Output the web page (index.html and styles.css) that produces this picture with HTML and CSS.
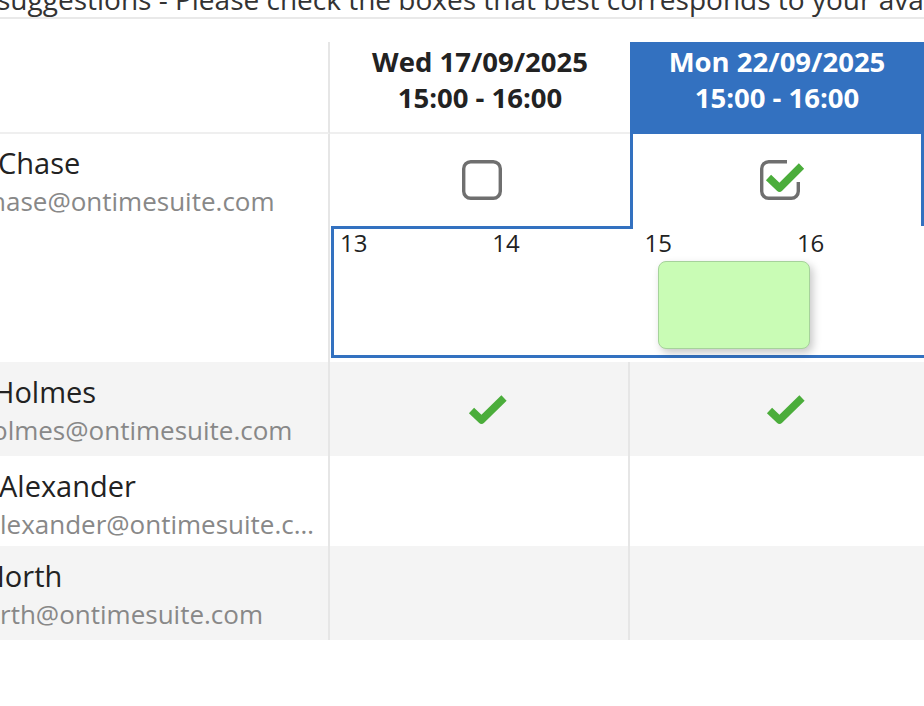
FILE: index.html
```html
<!DOCTYPE html>
<html lang="en">
<head>
<meta charset="utf-8">
<title>Poll</title>
<link rel="stylesheet" href="styles.css">
</head>
<body>
<p class="intro">suggestions - Please check the boxes that best corresponds to your availability</p>
<div class="poll">
  <div class="row head-row">
    <div class="cell name-col head"></div>
    <div class="cell head"><span>Wed 17/09/2025</span><span>15:00 - 16:00</span></div>
    <div class="cell head selected"><span>Mon 22/09/2025</span><span>15:00 - 16:00</span></div>
    <div class="cell head"></div>
  </div>

  <div class="row first">
    <div class="cell name-col person">
      <div class="name shift-c">Chase</div>
      <div class="email shift-ce">hase@ontimesuite.com</div>
    </div>
    <div class="cell vote">
      <svg class="box" width="40" height="40" viewBox="0 0 40 40"><rect x="1.7" y="1.7" width="36.6" height="36.6" rx="7" fill="none" stroke="#6f6f6f" stroke-width="3.4"/></svg>
    </div>
    <div class="cell vote selected-body">
      <svg class="box checked" width="48" height="42" viewBox="0 0 48 42"><path d="M27 1.7H8.7A7 7 0 0 0 1.7 8.7V31.3A7 7 0 0 0 8.7 38.3H31.3A7 7 0 0 0 38.3 31.3V22" fill="none" stroke="#6f6f6f" stroke-width="3.4"/><path d="M8.5 17.5L19.5 28L41.5 6" fill="none" stroke="#4bad3b" stroke-width="7.5" stroke-linejoin="round"/></svg>
    </div>
    <div class="cell"></div>
  </div>

  <div class="row expand">
    <div class="cell name-col"></div>
    <div class="timeline">
      <div class="hours"><span>13</span><span>14</span><span>15</span><span>16</span></div>
      <div class="slot-block"></div>
    </div>
  </div>

  <div class="row alt">
    <div class="cell name-col person">
      <div class="name shift-h">Holmes</div>
      <div class="email shift-he">olmes@ontimesuite.com</div>
    </div>
    <div class="cell vote col-two">
      <svg class="tick" width="56" height="30" viewBox="0 0 56 30"><path d="M20.5 16.5L30.5 26L53 4" fill="none" stroke="#4bad3b" stroke-width="7.5" stroke-linejoin="round"/></svg>
    </div>
    <div class="cell vote">
      <svg class="tick" width="56" height="30" viewBox="0 0 56 30"><path d="M20.5 16.5L30.5 26L53 4" fill="none" stroke="#4bad3b" stroke-width="7.5" stroke-linejoin="round"/></svg>
    </div>
    <div class="cell"></div>
  </div>

  <div class="row">
    <div class="cell name-col person">
      <div class="name shift-a">Alexander</div>
      <div class="email">lexander@ontimesuite.com</div>
    </div>
    <div class="cell vote col-two"></div>
    <div class="cell vote"></div>
    <div class="cell"></div>
  </div>

  <div class="row alt">
    <div class="cell name-col person">
      <div class="name shift-n">North</div>
      <div class="email">rth@ontimesuite.com</div>
    </div>
    <div class="cell vote col-two"></div>
    <div class="cell vote"></div>
    <div class="cell"></div>
  </div>
</div>
</body>
</html>
```

FILE: styles.css
```css
html, body {
  margin: 0;
  padding: 0;
  background: #ffffff;
  overflow: hidden;
}

body {
  width: 924px;
  height: 706px;
  font-family: "Open Sans", "Noto Sans", sans-serif;
  color: #222222;
}

.intro {
  margin: -19px 0 23px 0;
  text-indent: -3px;
  font-size: 28px;
  line-height: 36px;
  color: #333333;
  white-space: nowrap;
  overflow: hidden;
  border-bottom: 2px solid #e9e9e9;
}

.poll {
  width: 1224px;
}

.row {
  display: grid;
  grid-template-columns: 330px 300px 294px 300px;
  height: 90px;
}

.row.head-row,
.row.first {
  height: 92px;
}

.row.alt {
  height: 94px;
  background: #f4f4f4;
}

.cell {
  box-sizing: border-box;
  min-width: 0;
}

.name-col {
  border-right: 2px solid #e6e6e6;
}

.head {
  height: 92px;
  padding-top: 2px;
  border-bottom: 2px solid #efefef;
  display: flex;
  flex-direction: column;
  align-items: center;
  font-size: 27.5px;
  line-height: 36px;
  font-weight: 700;
  color: #222222;
}

.head.selected {
  background: #3371c0;
  color: #ffffff;
  border-bottom-color: #3371c0;
}

.person {
  padding: 11px 12px 0 0;
  overflow: hidden;
}

.row.first .person {
  padding-top: 10px;
}

.name {
  font-size: 29px;
  line-height: 38px;
  white-space: nowrap;
  color: #222222;
}

.email {
  font-size: 26px;
  line-height: 38px;
  color: #888888;
  white-space: nowrap;
  overflow: hidden;
  text-overflow: ellipsis;
}

.shift-c { margin-left: -2px; }
.shift-ce { margin-left: -10px; }
.shift-h { margin-left: -7px; }
.shift-he { margin-left: -8px; }
.shift-a { margin-left: -1px; }
.shift-n { margin-left: -17px; }

.vote {
  display: flex;
  align-items: center;
  justify-content: center;
}

.vote .box {
  margin-left: 3px;
}

.vote .box.checked {
  margin-left: 14px;
  margin-top: 2px;
}

.col-two {
  border-right: 2px solid #e6e6e6;
}

.selected-body {
  border-left: 3px solid #3371c0;
  border-right: 3px solid #3371c0;
}

.row.expand {
  height: 136px;
}

.timeline {
  grid-column: 2 / 5;
  position: relative;
  box-sizing: border-box;
  height: 132px;
  margin-left: 1px;
  border: 3px solid #3371c0;
  border-top: none;
  padding-top: 3px;
}

.timeline::before {
  content: "";
  position: absolute;
  top: 0;
  left: -3px;
  width: 302px;
  height: 3px;
  background: #3371c0;
}

.hours {
  display: flex;
  padding-left: 6px;
  font-size: 24px;
  line-height: 28px;
  color: #222222;
}

.hours span {
  width: 152.3px;
  flex: none;
}

.slot-block {
  position: absolute;
  left: 324px;
  top: 35px;
  width: 152px;
  height: 88px;
  box-sizing: border-box;
  background: #c9fcb5;
  border: 1.5px solid #a6d29b;
  border-radius: 8px;
  box-shadow: 3px 4px 8px rgba(0, 0, 0, 0.22);
}
```
